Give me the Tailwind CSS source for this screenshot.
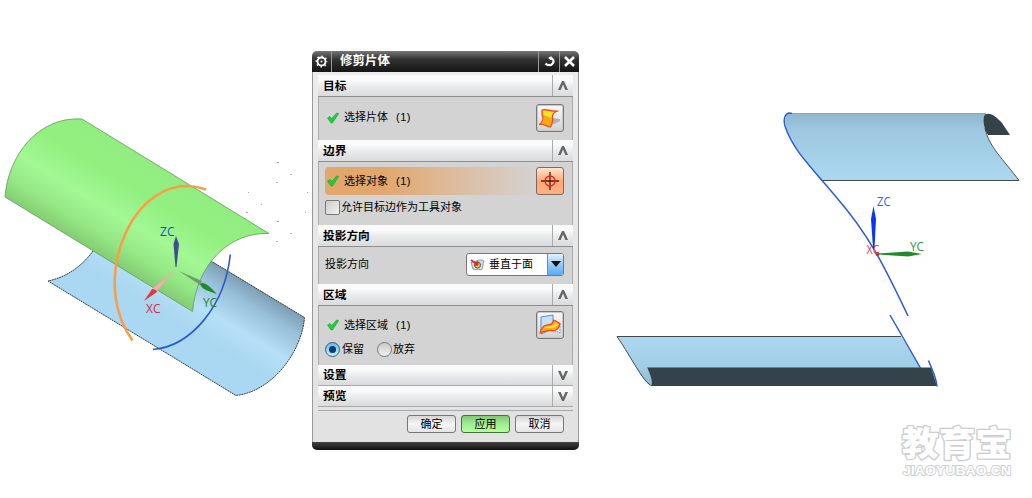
<!DOCTYPE html>
<html lang="zh-CN">

<head>
    <meta charset="UTF-8">
    <meta name="viewport" content="width=device-width, initial-scale=1.0">
    <title>修剪片体</title>
    <script src="https://cdn.jsdelivr.net/npm/@tailwindcss/browser@4"></script>
</head>

<body class="relative w-[1032px] h-[498px] overflow-hidden bg-white text-black font-['Liberation_Sans','Noto_Sans_CJK_SC',sans-serif]">
    <!-- Model views -->
    <svg class="block" width="1032" height="498" viewBox="0 0 1032 498" fill="none">
        <defs>
            <linearGradient id="green" gradientUnits="userSpaceOnUse" x1="175" y1="176" x2="118" y2="270">
                <stop offset="0" stop-color="#92ed80" />
                <stop offset=".3" stop-color="#92f080" />
                <stop offset=".58" stop-color="#a3f894" />
                <stop offset=".8" stop-color="#95e785" />
                <stop offset="1" stop-color="#80c870" />
            </linearGradient>
            <linearGradient id="blue" gradientUnits="userSpaceOnUse" x1="270" y1="296" x2="208" y2="398">
                <stop offset="0" stop-color="#7c9db1" />
                <stop offset=".15" stop-color="#97bfd8" />
                <stop offset=".38" stop-color="#b5e0f7" />
                <stop offset=".6" stop-color="#a9d6f0" />
                <stop offset="1" stop-color="#abd8f2" />
            </linearGradient>
            <linearGradient id="top" x1="0" y1="0" x2="0" y2="1">
                <stop offset="0" stop-color="#8fb8cd" />
                <stop offset=".25" stop-color="#9dc8df" />
                <stop offset="1" stop-color="#abd8f0" />
            </linearGradient>
            <linearGradient id="bottom" x1="0" y1="0" x2="0" y2="1">
                <stop offset="0" stop-color="#abd8f0" />
                <stop offset=".6" stop-color="#a2cfe6" />
                <stop offset="1" stop-color="#8fb8cd" />
            </linearGradient>
        </defs>

        <!-- Left view: both sheets -->
        <path d="M48 281C67 277 82 266 93 251L213 262L304.500 317.500C302 350 274 391 236 395.500Z" fill="url(#blue)" />
        <path d="M93 251C82 266 67 277 48 281L236 395.500C274 391 302 350 304.500 317.500L211 261" stroke="#334149" stroke-width="1" stroke-dasharray="2 .6" />
        <path d="M5 197C8 156 38 116 82 119L269 233.500C230 232 197 263 192.500 311.500Z" fill="url(#green)" stroke="#65995b" stroke-width=".8" />
        <path d="M206 189.500C170 177 137 201 122 242C109 279 114 315 132.500 340.500" stroke="#fb9c46" stroke-width="2.500" />
        <path d="M230.300 254.500C225 305 192 346 153 349.500" stroke="#2b59c9" stroke-width="1.600" />
        <path d="M176 236L173.500 244L175.500 267H176.500L179 244Z" fill="#414e91" />
        <path d="M174 271L153 288L157 291Z" fill="#f4aaa6" />
        <path d="M144 301L152 289C154 289 157 290 157 292Z" fill="#e43838" />
        <path d="M179 271L202 281L200 285Z" fill="#719e6c" />
        <path d="M200 284C203 281 208 284 217 294C209 291 202 290 200 284Z" fill="#208b2b" />
        <g class="font-['Open_Sans',sans-serif]" font-size="12.500">
            <text x="160" y="235.500" fill="#1c48d8" textLength="14.500" lengthAdjust="spacingAndGlyphs">ZC</text>
            <text x="146" y="312.500" fill="#d62e38" textLength="14.500" lengthAdjust="spacingAndGlyphs">XC</text>
            <text x="203" y="306.500" fill="#298238" textLength="14" lengthAdjust="spacingAndGlyphs">YC</text>
        </g>
        <path d="M277 162.500h2M290 174.500h2M276 182.500h2M248 192.500h1M307 192.500h1M261 204.500h1M246 212.500h2M305 212.500h1M277 221.500h2M290 233.500h2M276 241.500h2" stroke="#aaa" />

        <!-- Right view: trimmed sheets -->
        <path d="M788 113.500H986C981 128 987 141 1000 157L1019 180.500H821C800 154 777 124 788 113.500Z" fill="url(#top)" />
        <path d="M788 113.500H986" stroke="#7d9cab" stroke-width=".8" />
        <path d="M821 180.500H1019C1004 160 988 146 985 128" stroke="#42494d" stroke-width="1" />
        <path d="M985 114.500C991 112 996 117 1002 123L1010 135H988C984 130 982 118 985 114.500Z" fill="#344249" />
        <path d="M792 113.500C785 111 783 119 785 126C793 151 814 170 837 198C868 234 883 263 908 316" stroke="#2c5bd0" stroke-width="1.500" />
        <path d="M617 336.500H901L921 368H647C653 374 652 384 650 385.500C640 378 633 359 617 336.500Z" fill="url(#bottom)" />
        <path d="M901 336.500H617C633 360 642 380 651 385.500" stroke="#42494d" stroke-width="1" />
        <path d="M647 367.500H931L937 386H651C653 381 650 373 647 367.500Z" fill="#344249" />
        <path d="M890 315L920.500 368M928.500 360.500C932 370 936 376 937 386.500" stroke="#2c5bd0" stroke-width="1.500" />
        <path d="M873.500 206L871 219L873 248H874.500L876 219Z" fill="#0c35f0" />
        <path d="M878 253.500L908 251.500L922 254L908 256.500L878 254.500Z" fill="#218a2b" />
        <circle cx="877.500" cy="254" r="2" fill="#bf2028" />
        <g class="font-['Open_Sans',sans-serif]" font-size="12">
            <text x="877" y="205.500" fill="#2d5ee8" textLength="13.500" lengthAdjust="spacingAndGlyphs">ZC</text>
            <text x="910" y="250.500" fill="#369145" textLength="14" lengthAdjust="spacingAndGlyphs">YC</text>
            <text x="866.500" y="254" fill="#df4048" textLength="13" lengthAdjust="spacingAndGlyphs">XC</text>
        </g>

        <!-- Watermark -->
        <g fill="#fff" stroke="#cdcdcd" stroke-linejoin="round" paint-order="stroke">
            <text x="902" y="456" class="font-['Noto_Sans_CJK_SC',sans-serif] font-black" font-size="34" stroke-width="2.600" textLength="110" lengthAdjust="spacingAndGlyphs">教育宝</text>
            <text x="903" y="474.500" class="font-['Liberation_Sans',sans-serif] font-bold" font-size="13.500" stroke-width="1.800" textLength="108" lengthAdjust="spacingAndGlyphs">JIAOYUBAO.CN</text>
        </g>
    </svg>

    <!-- Shared icons -->
    <svg class="hidden">
        <symbol id="check" viewBox="0 0 12 12">
            <path d="M.5 6L3 4.500L4.800 6.500L9.500 1L11.800 1.500L5.500 11H4Z" fill="#20cf38" stroke="#149628" stroke-width=".5" />
        </symbol>
        <symbol id="up" viewBox="0 0 12 11">
            <path d="M1 10L5 1H7L11 10H8.300L6 4.500L3.700 10Z" fill="#666" />
        </symbol>
        <symbol id="down" viewBox="0 0 12 11">
            <path d="M1 1L5 10H7L11 1H8.300L6 6.500L3.700 1Z" fill="#666" />
        </symbol>
    </svg>

    <!-- Trim sheet dialog -->
    <section class="absolute left-[312px] top-[51px] w-[267px] h-[399px] flex flex-col rounded-[5px] overflow-hidden bg-[#e8e8e8] text-[11px] leading-none">
        <header class="h-[21px] shrink-0 flex items-center bg-linear-to-b from-[#777] via-[#333] via-40% to-[#151515] text-white">
            <div class="w-5 h-full flex items-center justify-center border-r border-[#999]">
                <svg width="13" height="13" viewBox="0 0 13 13" fill="none" stroke="#fff">
                    <circle cx="6.500" cy="6.500" r="4" stroke-width="1.800" />
                    <circle cx="6.500" cy="6.500" r="5.300" stroke-width="1.500" stroke-dasharray="1.500 2.663" stroke-dashoffset=".75" />
                    <circle cx="6.500" cy="6.500" r="1" fill="#fff" stroke="none" />
                </svg>
            </div>
            <h1 class="flex-1 pl-2 text-[12.500px] font-bold">修剪片体</h1>
            <button class="w-[21px] h-full flex items-center justify-center border-l border-[#999]">
                <svg width="11" height="11" viewBox="0 0 11 11" fill="none" stroke="#fff" stroke-width="2.200">
                    <path d="M5.500 2C9.500 2 10 5 9 7C7.500 10 3 9.500 1.500 7.500" />
                    <path d="M4 2L7.500 0V4.500Z" fill="#fff" stroke="none" />
                </svg>
            </button>
            <button class="w-5 h-full flex items-center justify-center border-l border-[#999]">
                <svg width="11" height="11" viewBox="0 0 11 11" stroke="#fff" stroke-width="2.600">
                    <path d="M1 1L10 10M10 1L1 10" />
                </svg>
            </button>
        </header>

        <main class="flex-1 flex flex-col px-[5px] pt-[3px] border-x border-[#999] bg-linear-to-b from-[#ececec] to-[#e2e2e2]">
            <!-- Target -->
            <div class="h-[22px] shrink-0 flex items-stretch bg-linear-to-b from-[#fafafa] from-25% via-[#e9eaeb] via-55% to-[#dadbdc] border-b border-[#8f8f8f]">
                <h2 class="flex-1 flex items-center pl-[5px] text-[11.700px] font-bold">目标</h2>
                <span class="w-[21px] flex items-center justify-center border-l border-[#aaa]"><svg width="12" height="11"><use href="#up" /></svg></span>
            </div>
            <div class="h-[43px] shrink-0 flex items-center pl-2 pr-[8px] pb-[2px] bg-[#d3d3d3] border-x border-[#aaa]">
                <svg width="12" height="12"><use href="#check" /></svg>
                <span class="flex-1 pl-[5px]">选择片体<span class="pl-[8px] tracking-[.5px]">(1)</span></span>
                <span class="size-7 flex items-center justify-center rounded-[3px] border border-[#777] bg-linear-to-b from-[#f8f8f8] via-[#e6e8eb] to-[#d2d2d2] shadow-[inset_0_0_0_1px_#c8c8c8]">
                    <svg width="24" height="24" viewBox="0 0 24 24">
                        <path d="M13 12L22 13V15L14 19Z" fill="#aeb2b7" />
                        <path d="M4 4C8 2 12 6 20 5C16 6 14.500 8 14.500 10C15.500 15 14 18 12.500 21C9 21 5 17 1.500 18.500C5 16 5.500 12 4 9Z" fill="#ffa912" stroke="#ee481c" stroke-width="1.200" stroke-linejoin="round" />
                        <path d="M5 5C9 4 11 6.500 16 6C13.500 8 13.500 10 13.500 11C10 12 8 9 5.500 9Z" fill="#ffe22f" />
                    </svg>
                </span>
            </div>

            <!-- Boundary -->
            <div class="h-[22px] shrink-0 flex items-stretch bg-linear-to-b from-[#fafafa] from-25% via-[#e9eaeb] via-55% to-[#dadbdc] border-b border-[#8f8f8f]">
                <h2 class="flex-1 flex items-center pl-[5px] text-[11.700px] font-bold">边界</h2>
                <span class="w-[21px] flex items-center justify-center border-l border-[#aaa]"><svg width="12" height="11"><use href="#up" /></svg></span>
            </div>
            <div class="h-[63px] shrink-0 pl-[6px] pr-[8px] pt-[5px] bg-[#d3d3d3] border-x border-[#aaa]">
                <div class="h-7 flex items-center pl-[2px] rounded-[4px] bg-linear-to-r from-[#e2a76d] from-25% to-[#d3d3d3] to-90%">
                    <svg width="12" height="12"><use href="#check" /></svg>
                    <span class="flex-1 pl-[5px]">选择对象<span class="pl-[8px] tracking-[.5px]">(1)</span></span>
                    <span class="size-7 flex items-center justify-center rounded-[3px] border border-[#80695c] bg-linear-to-b from-[#ffe3d2] via-[#ffa875] to-[#ffb183]">
                        <svg width="22" height="22" viewBox="0 0 22 22" fill="none" stroke-width="1.300">
                            <path d="M11 2V20M2 11H20" stroke="#392218" />
                            <circle cx="11" cy="11" r="5" stroke="#ed2019" />
                        </svg>
                    </span>
                </div>
                <label class="flex items-center pt-[5px]">
                    <span class="size-[15px] rounded-[2px] border border-[#777] bg-linear-to-br from-[#ccc] to-[#f2f2f2]"></span>
                    <span class="pl-px">允许目标边作为工具对象</span>
                </label>
            </div>

            <!-- Projection direction -->
            <div class="h-[22px] shrink-0 flex items-stretch bg-linear-to-b from-[#fafafa] from-25% via-[#e9eaeb] via-55% to-[#dadbdc] border-b border-[#8f8f8f]">
                <h2 class="flex-1 flex items-center pl-[5px] text-[11.700px] font-bold">投影方向</h2>
                <span class="w-[21px] flex items-center justify-center border-l border-[#aaa]"><svg width="12" height="11"><use href="#up" /></svg></span>
            </div>
            <div class="h-[37px] shrink-0 flex items-center justify-between pl-[6px] pr-[8px] pb-[3px] bg-[#d3d3d3] border-x border-[#aaa]">
                <span>投影方向</span>
                <div class="w-[98px] h-[23px] flex items-center rounded-[3px] border border-[#777] bg-white overflow-hidden">
                    <svg class="ml-[3px]" width="15" height="13" viewBox="0 0 15 13">
                        <path d="M1 4C4 5 9 0 14 3C12 6 14 10 11 12C8 10 5 13 3 11Z" fill="#d1e2f6" stroke="#7796cd" />
                        <circle cx="7.500" cy="7" r="3" fill="#ffd427" stroke="#79421b" />
                        <path d="M1 2L8 7M8 7L4.500 7M8 7L7 3.500" stroke="#e02828" stroke-width="1.700" />
                    </svg>
                    <span class="flex-1 pl-1">垂直于面</span>
                    <span class="w-4 h-full flex items-center justify-center border-l border-[#648cb8] bg-linear-to-b from-[#dff1ff] via-[#98c9f7] to-[#56acf3]">
                        <svg width="10" height="6"><path d="M0 0H10L5 6Z" fill="#111" /></svg>
                    </span>
                </div>
            </div>

            <!-- Region -->
            <div class="h-[22px] shrink-0 flex items-stretch bg-linear-to-b from-[#fafafa] from-25% via-[#e9eaeb] via-55% to-[#dadbdc] border-b border-[#8f8f8f]">
                <h2 class="flex-1 flex items-center pl-[5px] text-[11.700px] font-bold">区域</h2>
                <span class="w-[21px] flex items-center justify-center border-l border-[#aaa]"><svg width="12" height="11"><use href="#up" /></svg></span>
            </div>
            <div class="h-[59px] shrink-0 pl-[6px] pr-[8px] pt-[5px] bg-[#d3d3d3] border-x border-[#aaa]">
                <div class="h-7 flex items-center pl-[2px]">
                    <svg width="12" height="12"><use href="#check" /></svg>
                    <span class="flex-1 pl-[5px]">选择区域<span class="pl-[8px] tracking-[.5px]">(1)</span></span>
                    <span class="size-7 flex items-center justify-center rounded-[3px] border border-[#777] bg-linear-to-b from-[#f8f8f8] via-[#e6e8eb] to-[#d2d2d2] shadow-[inset_0_0_0_1px_#c8c8c8]">
                        <svg width="24" height="24" viewBox="0 0 24 24">
                            <path d="M3 4L15 2V16L3 21Z" fill="#c9e0f8" stroke="#5d8bc5" />
                            <path d="M15 13L22 11V20L17 18" fill="#dbe9f8" stroke="#7795bc" stroke-dasharray="2 1" />
                            <path d="M2 20C3 17 4 14 7 12.500C11 11 14 13 16 7L22 10.500C21 16 18 18 14 17.500C10 16.500 7 18 2 20Z" fill="#ffab16" stroke="#ee4b20" stroke-width="1.300" stroke-linejoin="round" />
                            <path d="M6 15C10 12 15 15 17.500 9.500L20 11C18 15 14 15 11 15Z" fill="#ffe03a" />
                        </svg>
                    </span>
                </div>
                <div class="flex items-center pt-[3px]">
                    <span class="size-[15px] flex items-center justify-center rounded-full border border-[#355d81] bg-linear-to-b from-[#69b6e4] to-[#bff5ff]"><span class="size-[7px] rounded-full bg-[#073c72]"></span></span>
                    <span class="pl-[2px]">保留</span>
                    <span class="ml-[13px] size-[15px] rounded-full border border-[#777] bg-linear-to-b from-[#ccc] to-[#f0f0f0]"></span>
                    <span class="pl-px">放弃</span>
                </div>
            </div>

            <!-- Collapsed groups -->
            <div class="h-[21px] shrink-0 flex items-stretch bg-linear-to-b from-[#fafafa] from-25% via-[#e9eaeb] via-55% to-[#dadbdc] border-b border-[#aaa]">
                <h2 class="flex-1 flex items-center pl-[5px] text-[11.700px] font-bold">设置</h2>
                <span class="w-[21px] flex items-center justify-center border-l border-[#aaa]"><svg width="12" height="11"><use href="#down" /></svg></span>
            </div>
            <div class="h-[21px] shrink-0 flex items-stretch bg-linear-to-b from-[#fafafa] from-25% via-[#e9eaeb] via-55% to-[#dadbdc] border-b border-[#aaa]">
                <h2 class="flex-1 flex items-center pl-[5px] text-[11.700px] font-bold">预览</h2>
                <span class="w-[21px] flex items-center justify-center border-l border-[#aaa]"><svg width="12" height="11"><use href="#down" /></svg></span>
            </div>

            <div class="mt-[3px] pt-1 flex justify-end gap-[5px] pr-[9px] border-t border-[#aaa]">
                <button class="w-[49px] h-[18px] rounded-[3px] border border-[#777] bg-linear-to-b from-[#d5d5d5] via-[#f5f5f5] to-[#e5e5e5]">确定</button>
                <button class="w-[49px] h-[18px] rounded-[3px] border border-[#427439] bg-linear-to-b from-[#82c776] via-[#a0ee91] to-[#b5ff9f]">应用</button>
                <button class="w-[49px] h-[18px] rounded-[3px] border border-[#777] bg-linear-to-b from-[#d5d5d5] via-[#f5f5f5] to-[#e5e5e5]">取消</button>
            </div>
        </main>
        <footer class="h-2 shrink-0 bg-linear-to-b from-[#444] to-[#111]"></footer>
    </section>
</body>

</html>
